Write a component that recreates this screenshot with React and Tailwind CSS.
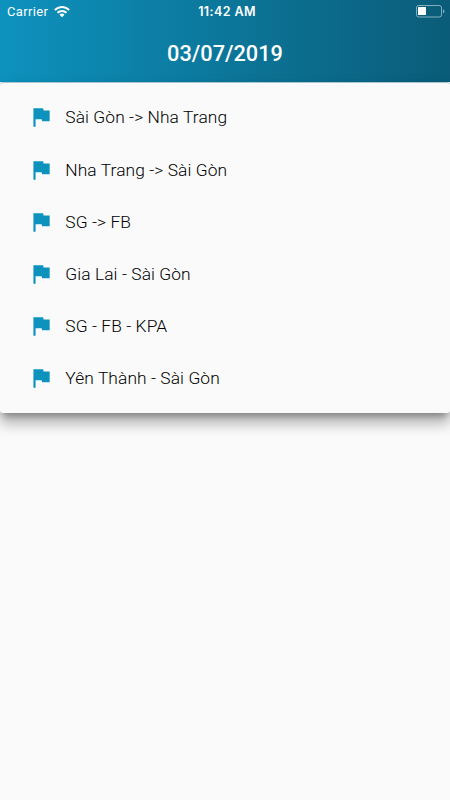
const routes = [
  "Sài Gòn -> Nha Trang",
  "Nha Trang -> Sài Gòn",
  "SG -> FB",
  "Gia Lai - Sài Gòn",
  "SG - FB - KPA",
  "Yên Thành - Sài Gòn",
];

function WifiIcon() {
  return (
    <svg className="w-4 h-3" viewBox="0 0 16 12" fill="none">
      <path d="M0.9 3.9a10.2 10.2 0 0 1 14.2 0" stroke="white" strokeWidth="2.1" />
      <path d="M3.5 6.8a6.4 6.4 0 0 1 9 0" stroke="white" strokeWidth="2" />
      <path d="M8 11.3l-2.5-2.5a3.5 3.5 0 0 1 5 0z" fill="white" />
    </svg>
  );
}

function BatteryIcon() {
  return (
    <svg className="w-[29px] h-[13px]" viewBox="0 0 29 13" fill="none">
      <rect x="0.5" y="0.5" width="25" height="11.5" rx="2.2" stroke="white" strokeOpacity="0.5" />
      <rect x="2" y="2" width="8" height="8" rx="0.5" fill="white" />
      <path d="M27 4.2c2 .8 2 3.4 0 4.2z" fill="white" fillOpacity="0.5" />
    </svg>
  );
}

function FlagIcon() {
  return (
    <svg className="w-[26px] h-[26px] shrink-0" viewBox="0 0 24 24" fill="#0d92be">
      <path d="M14.4 6L14 4H5v17h2v-7h5.6l.4 2h7V6z" />
    </svg>
  );
}

function StatusBar() {
  return (
    <div className="grid grid-cols-3 items-start h-[22px] pt-[3px] pl-[7px] pr-[5px] text-white text-[13px] leading-[17px]">
      <div className="flex items-center gap-1.5 tracking-[0.35px]">
        <span>Carrier</span>
        <WifiIcon />
      </div>
      <div className="text-center pl-0.5 font-['Inter'] font-semibold text-[12.5px] tracking-[0.4px]">
        11:42 AM
      </div>
      <div className="flex justify-end pt-0.5">
        <BatteryIcon />
      </div>
    </div>
  );
}

function App() {
  return (
    <div className="h-[800px] w-full overflow-hidden bg-[#fafafa] font-['Roboto',sans-serif]">
      <header className="h-[82px] bg-linear-to-r from-[#0d92be] to-[#0a5c78]">
        <StatusBar />
        <h1 className="h-[60px] leading-[63px] text-center text-white font-medium text-[21.74px]">
          03/07/2019
        </h1>
      </header>
      <ul className="relative h-[331px] pt-[8.4px] rounded-[3px] border-t border-[#a9c5d0] bg-[#fafafa] shadow-[0_6px_6px_-3px_rgba(0,0,0,0.25),0_11px_14px_0px_rgba(0,0,0,0.22),0_6px_16px_0px_rgba(0,0,0,0.12)]">
        {routes.map((route) => (
          <li key={route} className="flex items-center h-[52.17px] pl-[28.3px] gap-[11px]">
            <FlagIcon />
            <span className="text-[17.39px] font-light tracking-[0.08px] text-black">{route}</span>
          </li>
        ))}
      </ul>
    </div>
  );
}

export default App;
